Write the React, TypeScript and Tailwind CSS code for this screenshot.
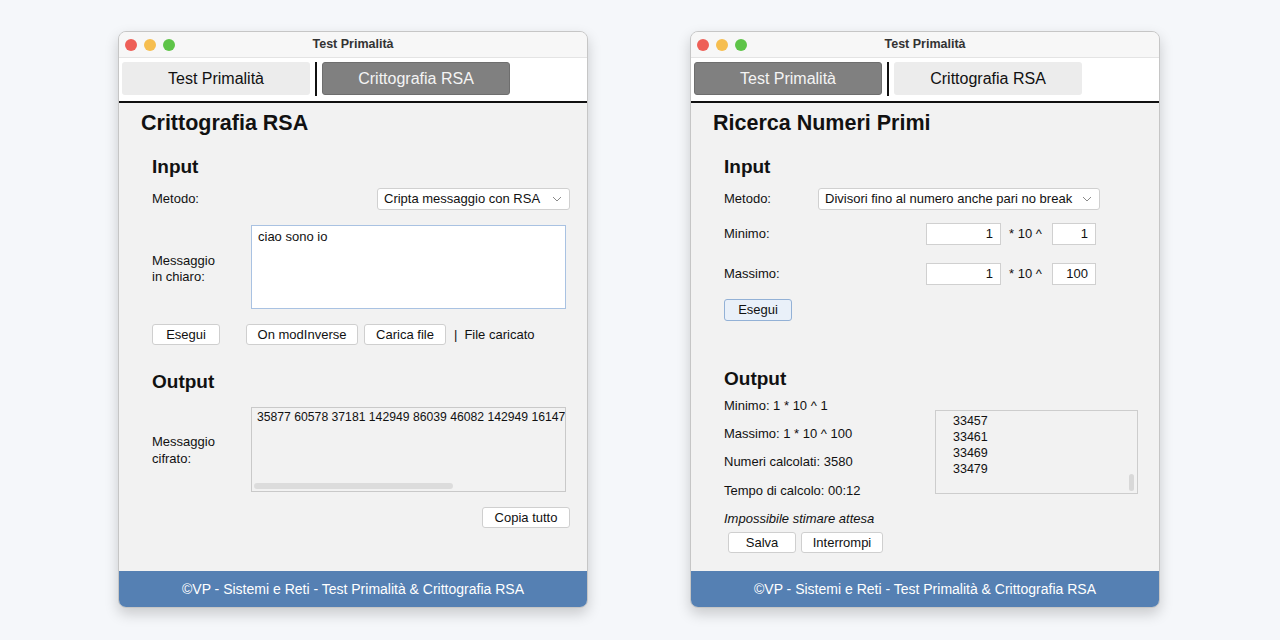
import type { ReactNode } from 'react';

const FONT = { fontFamily: '"Liberation Sans", Arial, sans-serif' };

function TrafficLights() {
  return (
    <div className="absolute left-[6px] top-[7px] flex gap-[7px]">
      <span className="w-[12px] h-[12px] rounded-full bg-[#ee5f57]" />
      <span className="w-[12px] h-[12px] rounded-full bg-[#f6be4f]" />
      <span className="w-[12px] h-[12px] rounded-full bg-[#5ec448]" />
    </div>
  );
}

function Tab({ label, active }: { label: string; active?: boolean }) {
  return (
    <div
      className={
        'w-[188px] h-[33px] rounded-[3px] flex items-center justify-center text-[16px] ' +
        (active ? 'bg-[#808080] text-[#f4f4f4] border border-[#6e6e6e]' : 'bg-[#ececec] text-[#111]')
      }
    >
      {label}
    </div>
  );
}

function Btn({ children, className = '' }: { children: ReactNode; className?: string }) {
  return (
    <div
      className={
        'h-[21px] flex items-center justify-center bg-white border border-[#cfcfcf] rounded-[3px] text-[13px] text-[#111] ' +
        className
      }
    >
      {children}
    </div>
  );
}

function Select({ label, className = '' }: { label: string; className?: string }) {
  return (
    <div
      className={
        'h-[22px] flex items-center justify-between bg-white border border-[#d0d0d0] rounded-[3px] pl-[6px] pr-[6px] text-[13px] text-[#111] ' +
        className
      }
    >
      <span>{label}</span>
      <svg width="10" height="6" viewBox="0 0 10 6" className="mr-[1px]">
        <path d="M1 1l4 4 4-4" fill="none" stroke="#8a8a8a" strokeWidth="1" />
      </svg>
    </div>
  );
}

function NumBox({ value, className = '' }: { value: string; className?: string }) {
  return (
    <div
      className={
        'h-[22px] flex items-center justify-end pr-[7px] bg-white border border-[#d0d0d0] text-[13px] text-[#111] ' +
        className
      }
    >
      {value}
    </div>
  );
}

function Window({ activeTab, children }: { activeTab: 0 | 1; children: ReactNode }) {
  return (
    <div className="w-[470px] h-[577px] flex flex-col rounded-[8px] border border-[#c6c6c6] overflow-hidden bg-[#f2f2f2] shadow-[0_6px_14px_rgba(0,0,0,0.18)]">
      <div className="relative h-[26px] shrink-0 bg-[#f7f7f7] border-b border-[#e4e4e4] flex items-center justify-center">
        <TrafficLights />
        <span className="text-[12.5px] font-bold text-[#333]">Test Primalità</span>
      </div>
      <div className="h-[43px] shrink-0 bg-white flex items-start pt-[4px] pl-[3px] gap-[5px]">
        <Tab label="Test Primalità" active={activeTab === 0} />
        <div className="w-[2px] h-[34px] bg-[#111]" />
        <Tab label="Crittografia RSA" active={activeTab === 1} />
      </div>
      <div className="h-[2px] shrink-0 bg-[#111]" />
      <div className="flex-1 flex flex-col">{children}</div>
      <div className="h-[36px] shrink-0 bg-[#5580b3] flex items-center justify-center text-[14px] text-white">
        ©VP - Sistemi e Reti - Test Primalità &amp; Crittografia RSA
      </div>
    </div>
  );
}

function RsaPanel() {
  return (
    <div className="pt-[8px] text-[13px] text-[#111]">
      <h1 className="pl-[22px] text-[21.5px] font-bold leading-[24px]">Crittografia RSA</h1>
      <div className="pl-[33px] pr-[17px]">
        <h2 className="mt-[21px] text-[19px] font-bold leading-[22px]">Input</h2>
        <div className="mt-[10px] flex items-center justify-between">
          <span>Metodo:</span>
          <Select label="Cripta messaggio con RSA" className="w-[193px]" />
        </div>
        <div className="mt-[15px] flex items-center">
          <span className="w-[99px] leading-[16px] pt-[4px]">
            Messaggio
            <br />
            in chiaro:
          </span>
          <div className="w-[315px] h-[84px] bg-white border border-[#a9c2e2] px-[6px] pt-[1px]">ciao sono io</div>
        </div>
        <div className="mt-[15px] flex items-center">
          <Btn className="w-[68px]">Esegui</Btn>
          <Btn className="ml-[26px] w-[112px]">On modInverse</Btn>
          <Btn className="ml-[6px] w-[82px]">Carica file</Btn>
          <span className="ml-[8px]">|</span>
          <span className="ml-[7px]">File caricato</span>
        </div>
        <h2 className="mt-[26px] text-[19px] font-bold leading-[22px]">Output</h2>
        <div className="mt-[14px] flex items-center">
          <span className="w-[99px] leading-[17px] pt-[1px]">
            Messaggio
            <br />
            cifrato:
          </span>
          <div className="relative w-[315px] h-[85px] border border-[#c9c9c9] bg-[#f2f2f2] overflow-hidden">
            <div className="pl-[5px] whitespace-nowrap text-[12.2px] leading-[18px]">
              35877 60578 37181 142949 86039 46082 142949 161475
            </div>
            <div className="absolute left-[2px] bottom-[2px] w-[199px] h-[6px] rounded-full bg-[#dcdcdc]" />
          </div>
        </div>
        <div className="mt-[15px] flex justify-end">
          <Btn className="w-[88px]">Copia tutto</Btn>
        </div>
      </div>
    </div>
  );
}

function PrimiPanel() {
  const numbers = ['33457', '33461', '33469', '33479'];
  return (
    <div className="pt-[8px] text-[13px] text-[#111]">
      <h1 className="pl-[22px] text-[21.5px] font-bold leading-[24px]">Ricerca Numeri Primi</h1>
      <div className="pl-[33px] pr-[20px]">
        <h2 className="mt-[21px] text-[19px] font-bold leading-[22px]">Input</h2>
        <div className="mt-[10px] flex items-center">
          <span className="w-[94px]">Metodo:</span>
          <Select label="Divisori fino al numero anche pari no break" className="w-[282px]" />
        </div>
        <div className="mt-[13px] flex items-center">
          <span className="flex-1">Minimo:</span>
          <NumBox value="1" className="w-[75px]" />
          <span className="w-[51px] pl-[8px]">* 10 ^</span>
          <NumBox value="1" className="w-[44px]" />
          <span className="w-[43px]" />
        </div>
        <div className="mt-[18px] flex items-center">
          <span className="flex-1">Massimo:</span>
          <NumBox value="1" className="w-[75px]" />
          <span className="w-[51px] pl-[8px]">* 10 ^</span>
          <NumBox value="100" className="w-[44px]" />
          <span className="w-[43px]" />
        </div>
        <div className="mt-[14px]">
          <div className="w-[68px] h-[22px] flex items-center justify-center bg-[#e9f0f9] border border-[#93b1d6] rounded-[3px]">
            Esegui
          </div>
        </div>
        <h2 className="mt-[47px] text-[19px] font-bold leading-[22px]">Output</h2>
        <div className="flex">
          <div className="w-[211px] flex flex-col">
            <span className="mt-[8px] leading-[16px]">Minimo: 1 * 10 ^ 1</span>
            <span className="mt-[12px] leading-[16px]">Massimo: 1 * 10 ^ 100</span>
            <span className="mt-[12px] leading-[16px]">Numeri calcolati: 3580</span>
            <span className="mt-[13px] leading-[16px]">Tempo di calcolo: 00:12</span>
            <span className="mt-[12px] leading-[16px] italic">Impossibile stimare attesa</span>
            <div className="mt-[5px] ml-[4px] flex gap-[5px]">
              <Btn className="w-[68px]">Salva</Btn>
              <Btn className="w-[82px]">Interrompi</Btn>
            </div>
          </div>
          <div className="relative mt-[20px] w-[203px] h-[84px] border border-[#cdcdcd] bg-[#f2f2f2] pl-[17px] pt-[2px]">
            {numbers.map((n) => (
              <div key={n} className="text-[12.5px] leading-[16px]">
                {n}
              </div>
            ))}
            <div className="absolute right-[3px] bottom-[2px] w-[5px] h-[17px] rounded-full bg-[#d8d8d8]" />
          </div>
        </div>
      </div>
    </div>
  );
}

export default function App() {
  return (
    <div style={FONT} className="w-[1280px] h-[640px] bg-[#f5f7fa] flex items-start pt-[31px] pl-[118px] gap-[102px]">
      <Window activeTab={1}>
        <RsaPanel />
      </Window>
      <Window activeTab={0}>
        <PrimiPanel />
      </Window>
    </div>
  );
}
